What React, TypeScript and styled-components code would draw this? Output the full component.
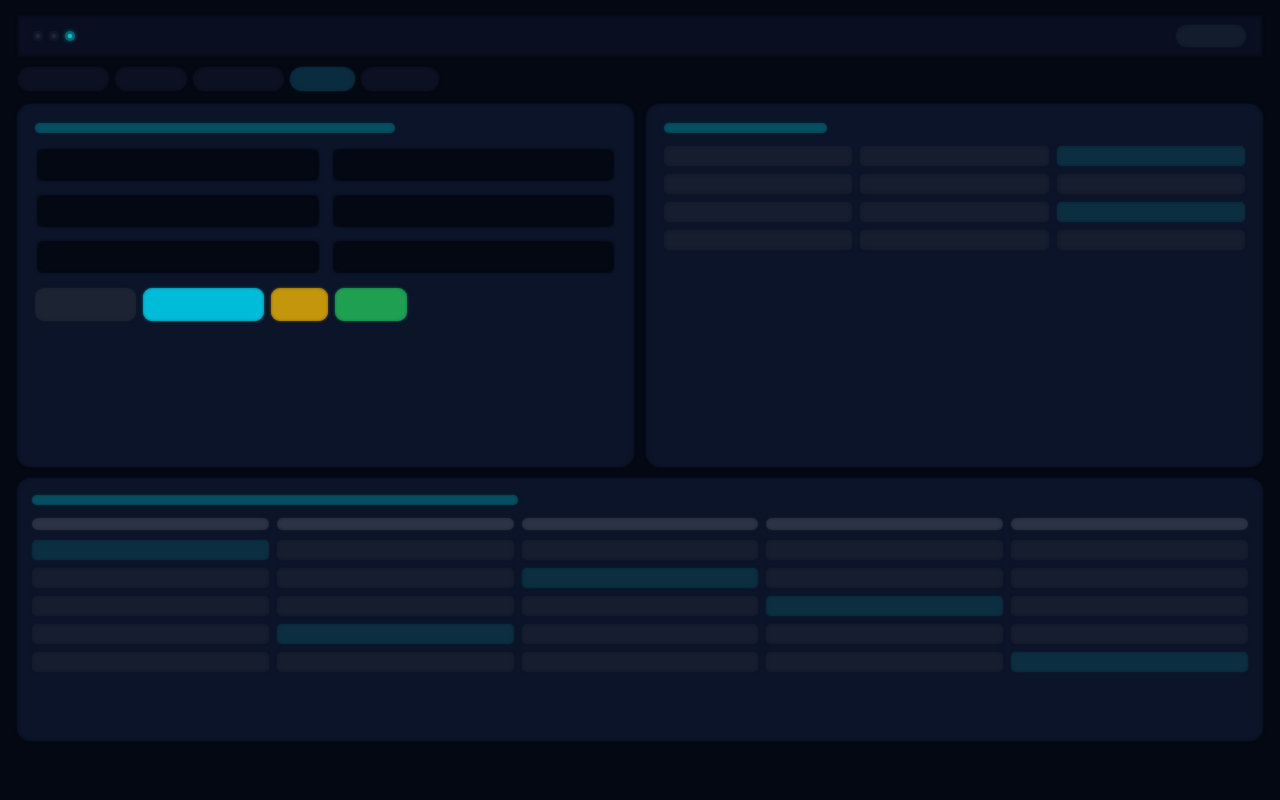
import React from "react";
import styled, { createGlobalStyle, css } from "styled-components";

const color = {
  page: "#040812",
  header: "#090f20",
  panel: "#0b1428",
  tab: "#0b1122",
  neutral: "#151d2e",
  neutralStrong: "#2c3346",
  accentDim: "#0b2e41",
  accentMid: "#064f62",
  accent: "#00bcd8",
};

/* A filled shape whose rim fades through a halo colour. */
const glow = (fill: string, halo: string) => css`
  background: ${fill};
  box-shadow: 0 0 3px ${halo}, inset 0 0 3px ${halo};
`;

const GlobalStyle = createGlobalStyle`
  *, *::before, *::after { box-sizing: border-box; }
  body {
    margin: 0;
    background: ${color.page};
    color: #cbd5e1;
    font-family: Inter, "Liberation Sans", sans-serif;
  }
`;

const Page = styled.div`
  min-height: 100vh;
  padding: 16px 17px;
`;

const Header = styled.header`
  display: flex;
  align-items: center;
  justify-content: space-between;
  height: 40px;
  margin: 0 1px;
  padding: 0 16px 0 15px;
  ${glow(color.header, "#080d1b")}
`;

const Dots = styled.div`
  display: flex;
  gap: 6px;
`;

const Dot = styled.span<{ $live?: boolean }>`
  display: grid;
  place-items: center;
  width: 10px;
  height: 10px;
  border-radius: 50%;
  background: ${(p) => (p.$live ? "#056273" : "#121828")};
  box-shadow: 0 0 4px ${(p) => (p.$live ? "#056273" : "#0d1424")};

  &::after {
    content: "";
    width: 4px;
    height: 4px;
    border-radius: 50%;
    background: ${(p) => (p.$live ? "#04c6d0" : "#1f2636")};
    box-shadow: 0 0 2px ${(p) => (p.$live ? "#04c6d0" : "#1f2636")};
  }
`;

const StatusButton = styled.button`
  width: 70px;
  height: 22px;
  padding: 0;
  border: 0;
  border-radius: 11px;
  ${glow("#131c2c", "#0e1728")}
`;

const Tabs = styled.nav`
  display: flex;
  gap: 6px;
  margin: 11px 1px 13px;
`;

const Tab = styled.button<{ $width: number; $active?: boolean }>`
  width: ${(p) => p.$width}px;
  height: 24px;
  padding: 0;
  border: 0;
  border-radius: 12px;
  ${(p) => (p.$active ? glow("#0a2c3f", "#0a2233") : glow(color.tab, "#090e1c"))}
`;

const Panels = styled.main`
  display: grid;
  grid-template-columns: 1fr 1fr;
  column-gap: 12px;
  row-gap: 11px;
`;

const Panel = styled.section<{ $wide?: boolean }>`
  min-width: 0;
  min-height: ${(p) => (p.$wide ? 263 : 363)}px;
  padding: ${(p) => (p.$wide ? "17px 15px" : "19px 18px")};
  grid-column: ${(p) => (p.$wide ? "1 / -1" : "auto")};
  border-radius: 14px;
  ${glow(color.panel, "#090f1f")}
`;

const Heading = styled.div<{ $width: number }>`
  width: ${(p) => p.$width}%;
  height: 10px;
  margin-bottom: 13px;
  border-radius: 5px;
  ${glow(color.accentMid, "#0a3548")}
`;

const Fields = styled.form`
  display: grid;
  grid-template-columns: 1fr 1fr;
  gap: 14px;
  padding: 3px 2px 0;
`;

const Field = styled.input`
  width: 100%;
  min-width: 0;
  height: 32px;
  padding: 0 10px;
  border: 0;
  border-radius: 6px;
  color: inherit;
  ${glow(color.page, "#080e1d")}
`;

const Actions = styled.div`
  display: flex;
  gap: 7px;
  margin-top: 15px;
`;

const Action = styled.button<{ $width: number; $fill: string; $halo: string }>`
  width: ${(p) => p.$width}px;
  height: 33px;
  padding: 0;
  border: 0;
  border-radius: 9px;
  ${(p) => glow(p.$fill, p.$halo)}
`;

const Table = styled.table`
  width: calc(100% + 16px);
  margin: -8px;
  table-layout: fixed;
  border-collapse: separate;
  border-spacing: 8px;

  th, td { padding: 0; }
  th { height: 14px; vertical-align: top; }
`;

const HeadBar = styled.div`
  height: 12px;
  border-radius: 6px;
  ${glow(color.neutralStrong, "#1a2234")}
`;

const CellBar = styled.div<{ $active: boolean }>`
  height: 20px;
  border-radius: 5px;
  ${(p) => (p.$active ? glow(color.accentDim, "#0b2438") : glow(color.neutral, "#10192b"))}
`;

type GridProps = {
  columns: number;
  rows: number;
  active: string[];
  head?: boolean;
  label: string;
};

function DataGrid({ columns, rows, active, head, label }: GridProps) {
  const cols = Array.from({ length: columns }, (_, i) => i);
  return (
    <Table aria-label={label}>
      {head && (
        <thead>
          <tr>
            {cols.map((c) => (
              <th key={c} scope="col" aria-label={`Column ${c + 1}`}>
                <HeadBar />
              </th>
            ))}
          </tr>
        </thead>
      )}
      <tbody>
        {Array.from({ length: rows }, (_, r) => (
          <tr key={r}>
            {cols.map((c) => (
              <td key={c}>
                <CellBar $active={active.includes(`${r}-${c}`)} />
              </td>
            ))}
          </tr>
        ))}
      </tbody>
    </Table>
  );
}

const tabs = [
  { width: 91 },
  { width: 72 },
  { width: 91 },
  { width: 65, active: true },
  { width: 78 },
];

const actions = [
  { label: "Reset", width: 101, fill: "#1c2434", halo: "#151d2e" },
  { label: "Submit", width: 121, fill: color.accent, halo: "#047688" },
  { label: "Hold", width: 57, fill: "#c4960c", halo: "#755a14" },
  { label: "Confirm", width: 72, fill: "#1fa050", halo: "#116b52" },
];

export default function App() {
  return (
    <>
      <GlobalStyle />
      <Page>
        <Header>
          <Dots>
            <Dot />
            <Dot />
            <Dot $live />
          </Dots>
          <StatusButton type="button" aria-label="Status" />
        </Header>
        <Tabs aria-label="Sections">
          {tabs.map((t, i) => (
            <Tab
              key={i}
              type="button"
              $width={t.width}
              $active={t.active}
              aria-label={`Section ${i + 1}`}
              aria-current={t.active ? "page" : undefined}
            />
          ))}
        </Tabs>
        <Panels>
          <Panel aria-label="Entry">
            <Heading $width={62} />
            <Fields>
              {[1, 2, 3, 4, 5, 6].map((n) => (
                <Field key={n} type="text" aria-label={`Field ${n}`} />
              ))}
            </Fields>
            <Actions>
              {actions.map((a) => (
                <Action
                  key={a.label}
                  type="button"
                  aria-label={a.label}
                  $width={a.width}
                  $fill={a.fill}
                  $halo={a.halo}
                />
              ))}
            </Actions>
          </Panel>
          <Panel aria-label="Summary">
            <Heading $width={28} />
            <DataGrid label="Summary" columns={3} rows={4} active={["0-2", "2-2"]} />
          </Panel>
          <Panel $wide aria-label="Records">
            <Heading $width={40} />
            <DataGrid
              label="Records"
              head
              columns={5}
              rows={5}
              active={["0-0", "1-2", "2-3", "3-1", "4-4"]}
            />
          </Panel>
        </Panels>
      </Page>
    </>
  );
}
